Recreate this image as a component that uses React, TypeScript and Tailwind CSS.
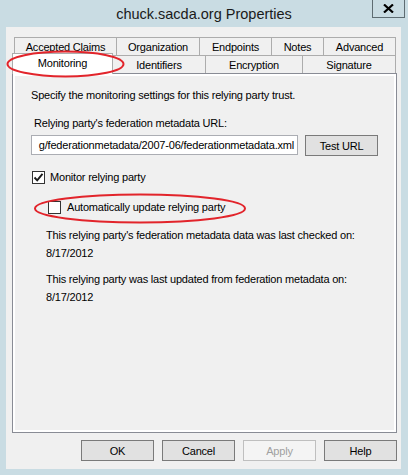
import React from 'react';

const backTabs = [
  { label: 'Accepted Claims', w: 'w-[102px]' },
  { label: 'Organization', w: 'w-[83px]' },
  { label: 'Endpoints', w: 'w-[72px]' },
  { label: 'Notes', w: 'w-[52px]' },
  { label: 'Advanced', w: 'w-[73px]' },
];

const frontTabs = [
  { label: 'Identifiers', w: 'w-[92px]' },
  { label: 'Encryption', w: 'w-[97px]' },
  { label: 'Signature', w: 'w-[94px]' },
];

function Checkbox({ checked }: { checked?: boolean }) {
  return (
    <div className="w-[13px] h-[13px] border border-[#333333] bg-white flex items-center justify-center shrink-0">
      {checked && (
        <svg width="11" height="11" viewBox="0 0 11 11">
          <path d="M1.5 5.5 L4.2 8.3 L9.5 1.8" fill="none" stroke="#1a1a1a" strokeWidth="1.9" />
        </svg>
      )}
    </div>
  );
}

function DlgButton({ label, disabled }: { label: string; disabled?: boolean }) {
  return (
    <div
      className={
        disabled
          ? 'w-[73px] h-[21px] border border-[#bfbfbf] bg-[#f4f4f4] text-[#a0a0a0] flex items-center justify-center'
          : 'w-[73px] h-[21px] border border-[#7a7a7a] bg-[#e1e1e1] text-black flex items-center justify-center'
      }
    >
      {label}
    </div>
  );
}

export default function App() {
  return (
    <div
      className="relative w-[408px] h-[475px] bg-[#c9dce3] flex flex-col overflow-hidden text-[11px] leading-[14px] tracking-[-0.2px] text-black"
      style={{ fontFamily: '"Liberation Sans", Arial, sans-serif' }}
    >
      {/* title bar */}
      <div className="relative h-[27px] flex items-center justify-center">
        <span className="text-[14.5px] tracking-normal text-[#1a1a1a] pt-[1px]">chuck.sacda.org Properties</span>
        <div className="absolute right-[3px] top-0 w-[33px] h-[18px] border-x border-b border-[#5e6c72] flex items-center justify-center">
          <svg width="11" height="9" viewBox="0 0 11 9">
            <path d="M1 0.5 L10 8.5 M10 0.5 L1 8.5" stroke="#000" strokeWidth="2.2" />
          </svg>
        </div>
      </div>

      {/* client area */}
      <div className="ml-[6px] w-[395px] h-[442px] bg-[#f0f0f0] flex flex-col pt-[10px]">
        {/* back row of tabs */}
        <div className="flex h-[18px] ml-[8px]">
          {backTabs.map((t, i) => (
            <div
              key={t.label}
              className={`${t.w} h-[18px] border-t border-l border-[#acacac] ${i === backTabs.length - 1 ? 'border-r' : ''} bg-[#f0f0f0] flex items-center justify-center`}
            >
              {t.label}
            </div>
          ))}
        </div>
        {/* front row of tabs */}
        <div className="flex items-end h-[18px] ml-[6px]">
          <div className="relative z-10 w-[101px] h-[21px] -mb-px border-t border-x border-[#acacac] bg-white flex items-start justify-center pt-[2px]">
            Monitoring
          </div>
          {frontTabs.map((t, i) => (
            <div
              key={t.label}
              className={`${t.w} h-[18px] border-t ${i === 0 ? '' : 'border-l'} ${i === frontTabs.length - 1 ? 'border-r' : ''} border-[#acacac] bg-[#f0f0f0] flex items-center justify-center`}
            >
              {t.label}
            </div>
          ))}
        </div>

        {/* tab page */}
        <div className="ml-[6px] w-[385px] h-[360px] border border-[#898c95] bg-white p-[2px] flex">
          <div className="flex-1 bg-[#f0f0f0] pl-[16px] pt-[12px] flex flex-col">
            <div>Specify the monitoring settings for this relying party trust.</div>
            <div className="mt-[14px] ml-[3px]">Relying party's federation metadata URL:</div>
            <div className="mt-[5px] flex items-start gap-[7px]">
              <div className="w-[267px] h-[20px] border border-[#abadb3] bg-white overflow-hidden flex items-center justify-end pr-[3px] whitespace-nowrap">
                g/federationmetadata/2007-06/federationmetadata.xml
              </div>
              <div className="w-[73px] h-[21px] border border-[#7a7a7a] bg-[#e1e1e1] flex items-center justify-center">
                Test URL
              </div>
            </div>
            <div className="mt-[14px] ml-[1px] flex items-center gap-[5px]">
              <Checkbox checked />
              <span>Monitor relying party</span>
            </div>
            <div className="mt-[16px] ml-[17px] flex items-center gap-[6px]">
              <Checkbox />
              <span>Automatically update relying party</span>
            </div>
            <div className="mt-[14px] ml-[15px]">This relying party's federation metadata data was last checked on:</div>
            <div className="mt-[4px] ml-[15px]">8/17/2012</div>
            <div className="mt-[12px] ml-[15px]">This relying party was last updated from federation metadata on:</div>
            <div className="mt-[4px] ml-[15px]">8/17/2012</div>
          </div>
        </div>

        {/* dialog buttons */}
        <div className="mt-[7px] flex justify-end gap-[8px] pr-[4px]">
          <DlgButton label="OK" />
          <DlgButton label="Cancel" />
          <DlgButton label="Apply" disabled />
          <DlgButton label="Help" />
        </div>
      </div>

      {/* red annotation circles */}
      <svg className="absolute inset-0 pointer-events-none z-20" width="408" height="475">
        <ellipse cx="65.5" cy="64" rx="58" ry="12.5" fill="none" stroke="#e2242b" strokeWidth="2" />
        <ellipse cx="140" cy="208.5" rx="105" ry="14" fill="none" stroke="#e2242b" strokeWidth="2" />
      </svg>
    </div>
  );
}
